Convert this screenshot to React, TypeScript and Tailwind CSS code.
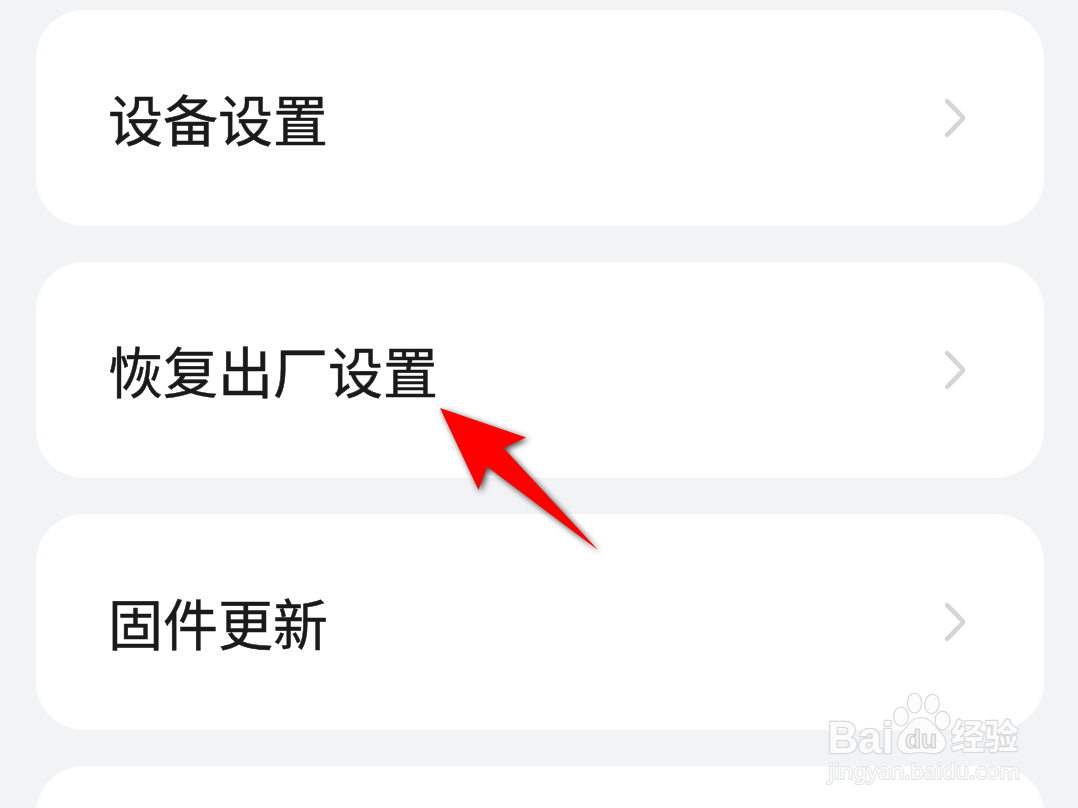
import React from "react";

const items: string[] = ["设备设置", "恢复出厂设置", "固件更新", ""];

function Chevron() {
  return (
    <svg
      width="24"
      height="44"
      viewBox="0 0 24 44"
      fill="none"
      stroke="#d5d5d5"
      strokeWidth="4.6"
      strokeLinecap="round"
      strokeLinejoin="round"
      aria-hidden="true"
    >
      <path d="M5.200 5.200 L20 20.300 Q21.700 22 20 23.700 L5.200 38.800" />
    </svg>
  );
}

function SettingCard({ label }: { label: string }) {
  return (
    <button
      type="button"
      className="flex h-[216px] w-full shrink-0 items-center justify-between rounded-[48px] bg-white pr-[78px] pl-[72px] text-left"
    >
      <span className="-mt-[2px] text-[55px] leading-[80px] text-[#1a1a1a] [-webkit-text-stroke:0.45px_#1a1a1a]">
        {label}
      </span>
      {label && <Chevron />}
    </button>
  );
}

function Pointer() {
  return (
    <svg
      className="pointer-events-none absolute top-[390px] left-[420px]"
      width="200"
      height="180"
      viewBox="0 0 200 180"
      style={{ filter: "drop-shadow(2px 2px 3px rgba(0,0,0,.75))" }}
      aria-hidden="true"
    >
      <path d="M20 18 L106 47.5 L83.5 58 L178 160 L67 76.5 L58.5 100 Z" fill="#ff0000" />
    </svg>
  );
}

function Watermark() {
  return (
    <svg
      className="pointer-events-none absolute top-[680px] left-[818px]"
      width="220"
      height="128"
      viewBox="0 0 220 128"
      fill="#fcfcfc"
      stroke="#d8d9da"
      strokeWidth="1.2"
      strokeLinejoin="round"
      aria-hidden="true"
    >
      <ellipse cx="83" cy="36.5" rx="7.5" ry="9.5" />
      <ellipse cx="96.5" cy="23" rx="7.2" ry="10" />
      <ellipse cx="114" cy="24" rx="7.3" ry="9.7" transform="rotate(8 114 24)" />
      <ellipse cx="124.5" cy="40.5" rx="7.5" ry="9.3" />
      <path d="M103 37.500 C95.500 37.500 92 42 88.500 47 C84 52 79.300 56 79.300 63.500 C79.300 70 84 73.700 90 73.700 C95 73.700 98 72.500 103 72.500 C108 72.500 111 73.700 116 73.700 C123 73.700 128 69 128 62.500 C128 56.500 122.500 52.500 118.500 47.500 C114.500 42.500 110.500 37.500 103 37.500 Z" />
      <text
        x="9.500"
        y="72.500"
        fontSize="44"
        fontFamily="'Liberation Sans', Arial, sans-serif"
        fontWeight="700"
        textLength="66"
        lengthAdjust="spacingAndGlyphs"
        strokeWidth="2.600"
        paintOrder="stroke"
      >
        Bai
      </text>
      <text
        x="87"
        y="68"
        fontSize="26"
        fontFamily="'Liberation Sans', Arial, sans-serif"
        fontWeight="700"
        fill="#f4f5f6"
        stroke="#cccdce"
        textLength="32"
        lengthAdjust="spacingAndGlyphs"
      >
        du
      </text>
      <text
        x="133"
        y="69"
        fontSize="34"
        fontFamily="'Noto Sans CJK SC', sans-serif"
        fontWeight="700"
        textLength="67"
        lengthAdjust="spacingAndGlyphs"
        strokeWidth="2.400"
        paintOrder="stroke"
      >
        经验
      </text>
      <text
        x="10"
        y="98.500"
        fontSize="22"
        fontFamily="'Noto Sans', 'Open Sans', sans-serif"
        fontWeight="400"
        textLength="192"
        lengthAdjust="spacingAndGlyphs"
        stroke="#e2e3e4"
        strokeWidth="2"
        paintOrder="stroke"
      >
        jingyan.baidu.com
      </text>
    </svg>
  );
}

export default function App() {
  return (
    <main className="relative h-[808px] w-[1078px] overflow-hidden bg-[#f1f3f5] font-['Noto_Sans_CJK_SC',sans-serif]">
      <div className="flex flex-col gap-9 pt-[10px] pr-[34px] pl-9">
        {items.map((label, index) => (
          <SettingCard key={index} label={label} />
        ))}
      </div>
      <Pointer />
      <Watermark />
    </main>
  );
}
